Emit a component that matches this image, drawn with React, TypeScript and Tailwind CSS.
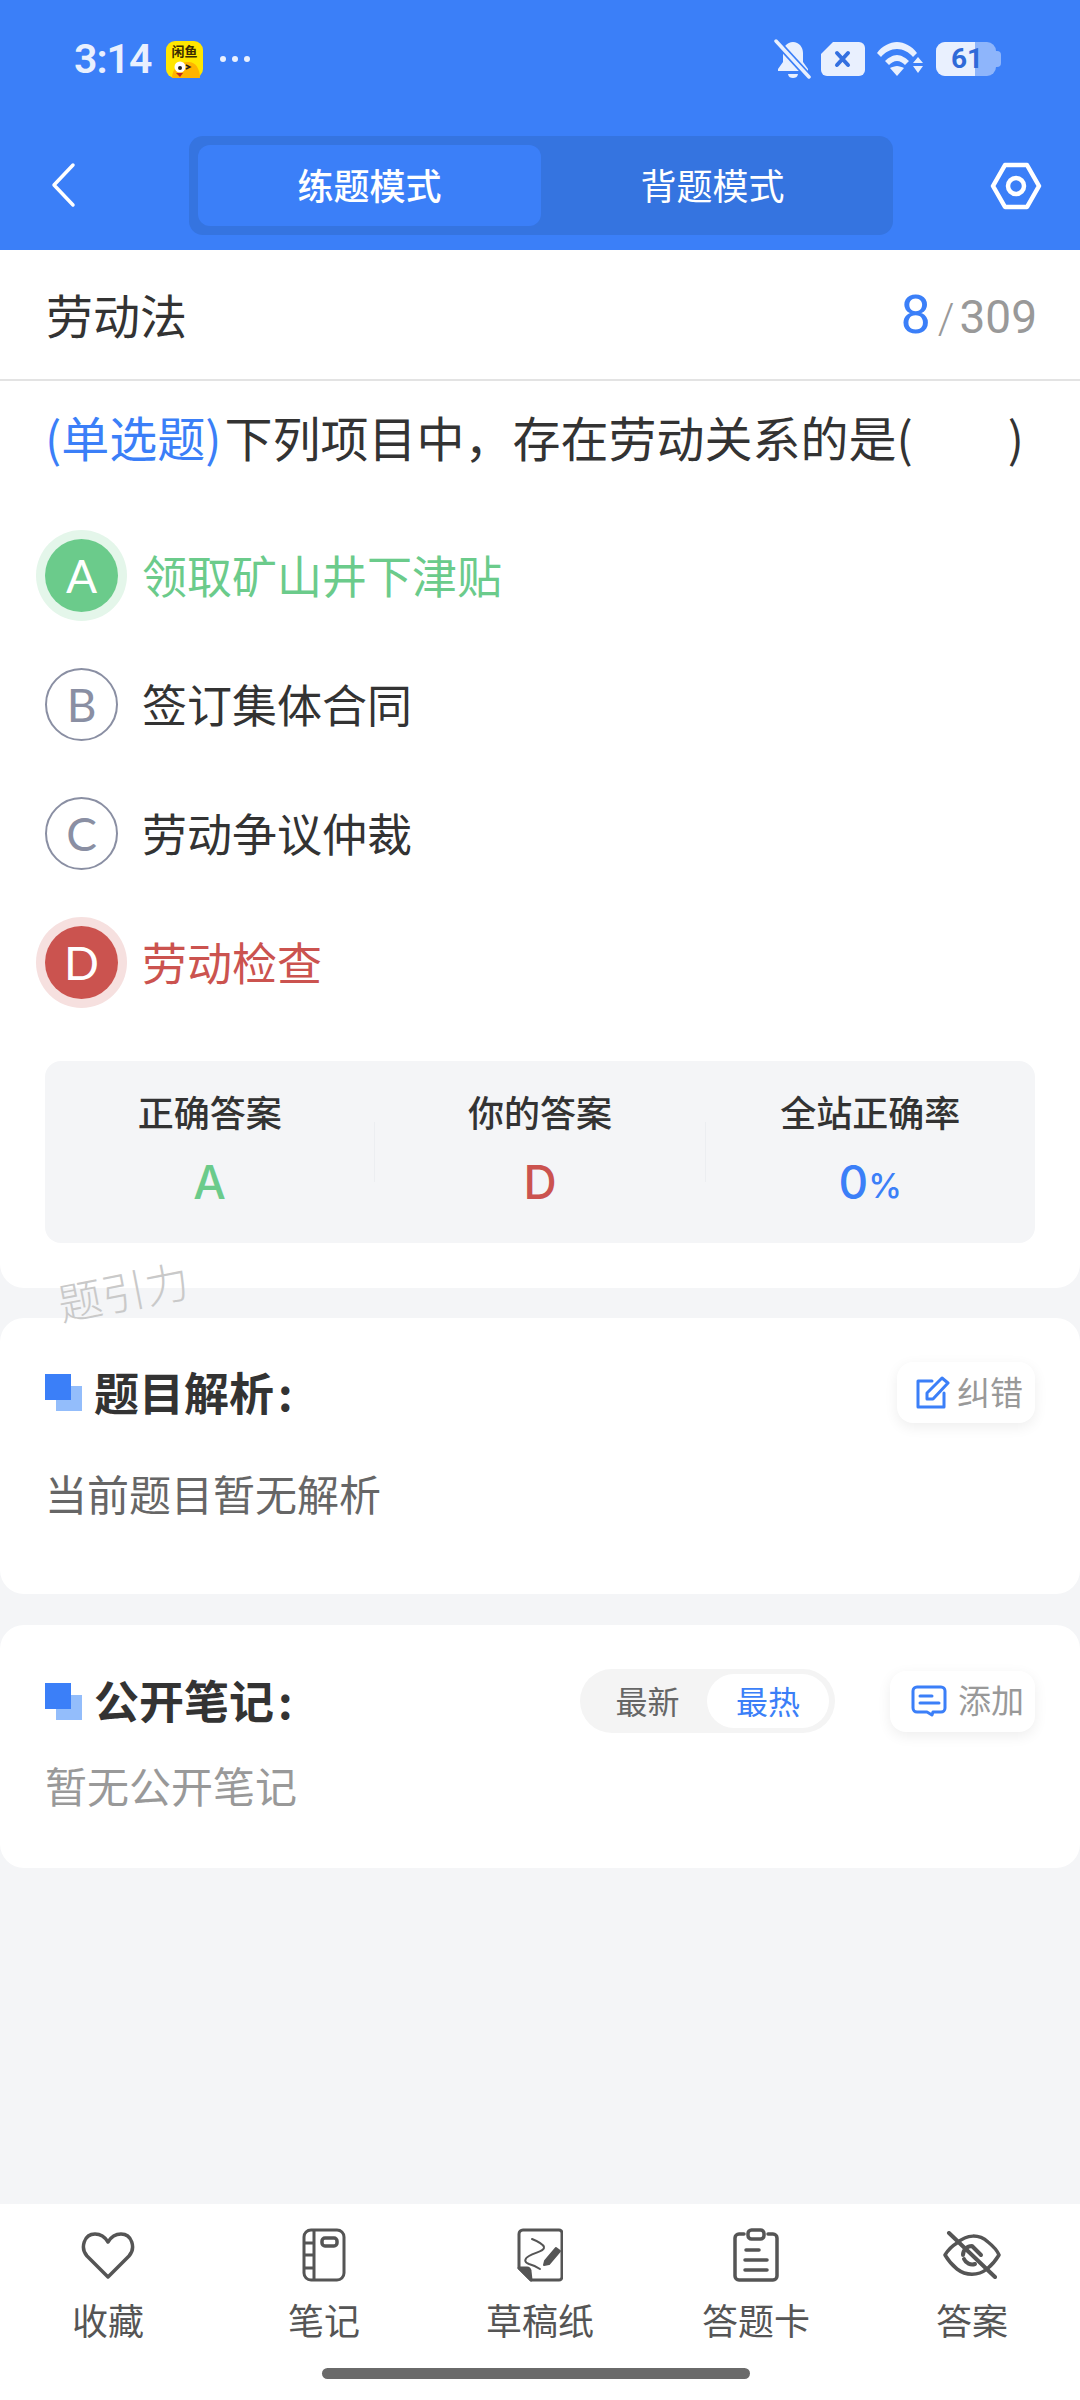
import type React from "react"

const cjk = "font-['Noto_Sans_CJK_SC','Noto_Sans',sans-serif]"

function StatusBar() {
  return (
    <div className="h-[120px] flex items-start justify-between pt-[40px] pl-[74px] pr-[79px]">
      <div className="flex items-center h-[38px]">
        <span className="font-['Roboto',sans-serif] font-semibold text-[41px] tracking-[-1px] leading-none text-[#e9f0fe] w-[92px]">3:14</span>
        <svg width="37" height="37" viewBox="0 0 37 37">
          <rect width="37" height="37" rx="9" fill="#ffe600" />
          <text x="18.5" y="15" textAnchor="middle" fontSize="13" fontWeight="700" fill="#3a2c00" fontFamily="Noto Sans CJK SC">闲鱼</text>
          <path d="M6 37c0-9 7-15 15-16 8-1 13 6 13 16z" fill="#ffb400" />
          <circle cx="14" cy="26" r="5.5" fill="#fff" />
          <circle cx="14" cy="27" r="2" fill="#222" />
          <path d="M20 24l4 2-4 2" stroke="#222" strokeWidth="1.5" fill="none" />
          <path d="M10 32h7l-3 4z" fill="#c2261c" />
        </svg>
        <div className="flex gap-[6px] ml-[17px]">
          <span className="w-[6px] h-[6px] rounded-full bg-[#e9f0fe]" />
          <span className="w-[6px] h-[6px] rounded-full bg-[#e9f0fe]" />
          <span className="w-[6px] h-[6px] rounded-full bg-[#e9f0fe]" />
        </div>
      </div>
      <div className="flex items-center h-[38px]">
        <svg width="38" height="40" viewBox="0 0 38 40" fill="#e9f0fe">
          <path d="M19 3c6 0 10 5 10 11v9l5 7v2H4v-2l5-7V14C9 8 13 3 19 3z" />
          <path d="M14 35h10c-.5 3-2.500 4-5 4s-4.500-1-5-4z" />
          <path d="M2 2l33 36" stroke="#3b7ff8" strokeWidth="7" />
          <path d="M2 2l33 36" stroke="#e9f0fe" strokeWidth="3.500" strokeLinecap="round" />
        </svg>
        <svg className="ml-[9px]" width="44" height="34" viewBox="0 0 44 34">
          <path d="M12 0h26a6 6 0 0 1 6 6v22a6 6 0 0 1-6 6H6a6 6 0 0 1-6-6V12z" fill="#e9f0fe" />
          <path d="M16 11l11 12M27 11L16 23" stroke="#3470e0" strokeWidth="4" strokeLinecap="round" />
        </svg>
        <svg className="ml-[12px]" width="47" height="34" viewBox="0 0 47 34" fill="#e9f0fe">
          <path d="M0 11C5 4 13 0 20 0s15 4 20 11l-4 4C32 10 26 7 20 7S8 10 4 15z" />
          <path d="M8 19c3-3 8-6 12-6s9 3 12 6l-4 4c-2-2-5-4-8-4s-6 2-8 4z" />
          <path d="M13 26c2-1 5-2 7-2s5 1 7 2l-7 8z" />
          <path d="M42 13l5 6H37zM37 22h10l-5 7z" transform="translate(-1 2)" />
        </svg>
        <div className="ml-[12px] relative w-[65px] h-[34px]">
          <div className="absolute right-0 top-[9px] w-[6px] h-[16px] rounded-r-[4px] bg-[#8eb5fb]" />
          <div className="absolute left-0 top-0 w-[60px] h-[34px] rounded-[9px] bg-[#8eb5fb]" />
          <div className="absolute left-0 top-0 w-[39px] h-[34px] rounded-l-[9px] bg-[#e9f0fe]" />
          <span className="absolute left-[15px] top-0 font-['Roboto',sans-serif] font-bold text-[28px] leading-[34px] text-[#2f6ad8]">61</span>
        </div>
      </div>
    </div>
  )
}

function NavBar() {
  return (
    <div className="h-[130px] flex items-start">
      <div className="w-[189px] pl-[50px] pt-[42px]">
        <svg width="26" height="46" viewBox="0 0 26 46" fill="none" stroke="#fff" strokeWidth="3.500" strokeLinecap="round" strokeLinejoin="round">
          <path d="M23 3L4 23l19 20" />
        </svg>
      </div>
      <div className={`w-[704px] h-[99px] mt-[16px] p-[9px] rounded-[14px] bg-[#3574e0] flex text-[36px] leading-none text-white ${cjk}`}>
        <div className="w-[343px] h-[81px] pb-[3px] rounded-[12px] bg-[#3b7ff8] flex items-center justify-center font-medium">练题模式</div>
        <div className="flex-1 pb-[3px] flex items-center justify-center">背题模式</div>
      </div>
      <div className="pl-[97px] pt-[42px]">
        <svg width="52" height="48" viewBox="0 0 52 48" fill="none" stroke="#fff" strokeWidth="4.500" strokeLinejoin="round">
          <path d="M15 3h22l12 21-12 21H15L3 24z" />
          <circle cx="26" cy="24" r="8" />
        </svg>
      </div>
    </div>
  )
}

function OptionRow({ letter, text, state }: { letter: string; text: string; state?: "right" | "wrong" }) {
  const badge =
    state === "right"
      ? "bg-[#6bcb8b] text-white ring-[9px] ring-[#e4f6ea] border-transparent"
      : state === "wrong"
        ? "bg-[#cb534f] text-white ring-[9px] ring-[#f6e0df] border-transparent"
        : "border-[#8a8fa3] text-[#8a8fa3]"
  const label = state === "right" ? "text-[#6bcb8b]" : state === "wrong" ? "text-[#cb534f]" : "text-[#333333]"
  return (
    <div className="h-[129px] flex items-center">
      <div className={`w-[73px] h-[73px] rounded-full border-2 flex items-center justify-center font-['Lato',sans-serif] text-[46px] leading-none ${badge}`}>
        {letter}
      </div>
      <span className={`ml-[24px] pb-[3px] text-[45px] leading-none ${label}`}>{text}</span>
    </div>
  )
}

function Stat({ title, children }: { title: string; children: React.ReactNode }) {
  return (
    <div className="flex-1 flex flex-col items-center pt-[30px]">
      <span className="text-[36px] leading-[40px] font-medium text-[#333333]">{title}</span>
      <div className="mt-[28px] h-[46px] flex items-end font-['Inter',sans-serif] font-medium text-[46px] leading-none">{children}</div>
    </div>
  )
}

function SectionMark() {
  return (
    <svg width="37" height="37" viewBox="0 0 37 37">
      <rect x="11" y="12" width="26" height="25" fill="#93bdfb" />
      <rect width="26" height="26" fill="#3b7ff8" />
    </svg>
  )
}

function SectionTitle({ children }: { children: string }) {
  return (
    <span className="ml-[12px] pb-[3px] text-[45px] leading-none font-bold text-[#333333]">
      {children}
      <span className="ml-[4px]">:</span>
    </span>
  )
}

function ActionButton({ label, children, className }: { label: string; children: React.ReactNode; className: string }) {
  return (
    <div className={`h-[61px] rounded-[16px] bg-white shadow-[0_4px_14px_rgba(0,0,0,0.07)] flex items-center ${className}`}>
      {children}
      <span className="pb-[3px] text-[33px] leading-none text-[#999999]">{label}</span>
    </div>
  )
}

function TabItem({ label, children }: { label: string; children: React.ReactNode }) {
  return (
    <div className="flex-1 flex flex-col items-center">
      <div className="h-[58px] flex items-center justify-center">{children}</div>
      <span className="mt-[15px] text-[36px] leading-[40px] text-[#555555]">{label}</span>
    </div>
  )
}

export default function App() {
  return (
    <div className={`relative w-[1080px] h-[2400px] overflow-hidden bg-[#f4f5f7] flex flex-col ${cjk}`}>
      <div className="bg-[#3b7ff8]">
        <StatusBar />
        <NavBar />
      </div>

      {/* Question */}
      <div className="bg-white rounded-b-[24px] pb-[45px]">
        <div className="h-[131px] pl-[46px] pr-[43px] border-b-2 border-[#e3e3e3] flex items-center justify-between">
          <span className="pb-[3px] text-[47px] leading-none text-[#333333]">劳动法</span>
          <div className="flex items-baseline font-['Roboto',sans-serif] text-[#999999]">
            <span className="text-[54px] leading-none text-[#3b7ff8]">8</span>
            <span className="ml-[7px] text-[42px] leading-none font-light">/</span>
            <span className="ml-[5px] text-[46px] leading-none">309</span>
          </div>
        </div>
        <div className="px-[45px]">
          <p className="mt-[25px] text-[48px] leading-[60px] text-[#333333] whitespace-nowrap">
            <span className="text-[#3b7ff8]">(单选题)</span>
            <span className="ml-[3px]">下列项目中，存在劳动关系的是(</span>
            <span className="ml-[95px]">)</span>
          </p>
          <div className="mt-[45px]">
            <OptionRow letter="A" text="领取矿山井下津贴" state="right" />
            <OptionRow letter="B" text="签订集体合同" />
            <OptionRow letter="C" text="劳动争议仲裁" />
            <OptionRow letter="D" text="劳动检查" state="wrong" />
          </div>
          <div className="mt-[34px] h-[182px] rounded-[16px] bg-[#f4f5f7] flex">
            <Stat title="正确答案"><span className="text-[#6bcb8b]">A</span></Stat>
            <div className="w-[1px] h-[60px] mt-[61px] bg-[#eceef1]" />
            <Stat title="你的答案"><span className="text-[#cb534f]">D</span></Stat>
            <div className="w-[1px] h-[60px] mt-[61px] bg-[#eceef1]" />
            <Stat title="全站正确率">
              <span className="text-[#3b7ff8]">0</span>
              <span className="text-[#3b7ff8] text-[34px] leading-[38px]">%</span>
            </Stat>
          </div>
        </div>
      </div>

      {/* Analysis */}
      <div className="mt-[30px] bg-white rounded-[24px] px-[45px] pt-[44px] pb-[71px]">
        <div className="flex items-center justify-between">
          <div className="flex items-center">
            <SectionMark />
            <SectionTitle>题目解析</SectionTitle>
          </div>
          <ActionButton label="纠错" className="w-[138px] pl-[19px]">
            <svg className="mr-[7px]" width="34" height="34" viewBox="0 0 34 34" fill="none" stroke="#3b7ff8" strokeWidth="3" strokeLinejoin="round" strokeLinecap="round">
              <path d="M16 5H2v26h26V17" />
              <path d="M26 2l6 5-15 16h-6v-6z" />
            </svg>
          </ActionButton>
        </div>
        <p className="mt-[40px] text-[42px] leading-[60px] text-[#666666]">当前题目暂无解析</p>
      </div>

      {/* Public notes */}
      <div className="mt-[31px] bg-white rounded-[24px] px-[45px] pt-[44px] pb-[53px]">
        <div className="flex items-center h-[64px]">
          <SectionMark />
          <SectionTitle>公开笔记</SectionTitle>
          <div className="ml-auto w-[255px] h-[64px] rounded-full bg-[#f4f4f4] flex items-center pr-[6px] text-[32px] leading-none">
            <span className="w-[127px] pb-[3px] text-center text-[#666666] pl-[8px]">最新</span>
            <span className="w-[122px] h-[54px] pb-[3px] rounded-full bg-white flex items-center justify-center text-[#3b7ff8]">最热</span>
          </div>
          <ActionButton label="添加" className="ml-[55px] w-[145px] pl-[21px]">
            <svg className="mr-[11px]" width="36" height="34" viewBox="0 0 36 34" fill="none" stroke="#3b7ff8" strokeWidth="3" strokeLinejoin="round" strokeLinecap="round">
              <path d="M6 3h24a4 4 0 0 1 4 4v17a4 4 0 0 1-4 4h-8l-1 3-5-3H6a4 4 0 0 1-4-4V7a4 4 0 0 1 4-4z" />
              <path d="M9 12h12M9 19h19" />
            </svg>
          </ActionButton>
        </div>
        <p className="mt-[22px] text-[42px] leading-[60px] text-[#999999]">暂无公开笔记</p>
      </div>

      <div className="flex-1" />

      {/* Bottom toolbar */}
      <div className="h-[196px] bg-white pt-[22px]">
        <div className="flex">
          <TabItem label="收藏">
            <svg width="54" height="48" viewBox="0 0 54 48" fill="none" stroke="#555555" strokeWidth="3.500" strokeLinejoin="round">
              <path d="M27 46L6 25C-1 17 3 3 14 3c6 0 10 3 13 8 3-5 7-8 13-8 11 0 15 14 8 22z" />
            </svg>
          </TabItem>
          <TabItem label="笔记">
            <svg width="44" height="54" viewBox="0 0 44 54" fill="none" stroke="#555555" strokeWidth="3" strokeLinejoin="round">
              <rect x="2" y="2" width="40" height="50" rx="7" />
              <path d="M12 2v50M2 15h10M2 27h10M2 40h10" />
              <rect x="20" y="10" width="15" height="8" rx="3" strokeWidth="3.500" />
            </svg>
          </TabItem>
          <TabItem label="草稿纸">
            <svg width="46" height="54" viewBox="0 0 46 54" fill="none" stroke="#555555" strokeWidth="3" strokeLinejoin="round" strokeLinecap="round">
              <path d="M2 40V6a4 4 0 0 1 4-4h36a3 3 0 0 1 3 3v44a3 3 0 0 1-3 3H14z" />
              <path d="M2 40l12 12-1-9a3 3 0 0 0-3-3z" fill="#555555" />
              <path d="M15 11c5 2 11 5 12 8 1 4-8 5-15 9-5 3-5 6 0 8 4 1 8 3 11 5" strokeWidth="2" />
              <path d="M28 33l11-13 4 3-11 13-5 1z" fill="#555555" strokeWidth="2" />
            </svg>
          </TabItem>
          <TabItem label="答题卡">
            <svg width="46" height="54" viewBox="0 0 46 54" fill="none" stroke="#555555" strokeWidth="3.500" strokeLinejoin="round" strokeLinecap="round">
              <path d="M11 6H6a4 4 0 0 0-4 4v38a4 4 0 0 0 4 4h34a4 4 0 0 0 4-4V10a4 4 0 0 0-4-4h-5" />
              <rect x="15" y="2" width="16" height="9" rx="3.500" />
              <path d="M13 22h13M12 32h22M12 42h22" />
            </svg>
          </TabItem>
          <TabItem label="答案">
            <svg width="58" height="48" viewBox="0 0 58 48" fill="none" stroke="#555555" strokeWidth="3.500" strokeLinejoin="round" strokeLinecap="round">
              <path d="M14 12C24 3 36 3 45 11c5 4 9 8 11 13-3 5-7 10-12 14-9 7-21 7-30 0-5-4-9-9-12-14 3-5 7-9 12-12z" />
              <path d="M6 2l46 44" strokeWidth="4" />
              <path d="M20 24a9 9 0 0 1 9-9l9 9" strokeWidth="4" />
              <path d="M21 28a9 9 0 0 0 11 5" strokeWidth="4" />
            </svg>
          </TabItem>
        </div>
        <div className="w-[428px] h-[11px] mt-[29px] ml-[322px] rounded-full bg-[#6a6a6a]" />
      </div>

      {/* watermark */}
      <span className="absolute left-[57px] top-[1264px] text-[44px] leading-[52px] font-light text-[#c9c9c9] -rotate-[11deg]">题引力</span>
    </div>
  )
}
